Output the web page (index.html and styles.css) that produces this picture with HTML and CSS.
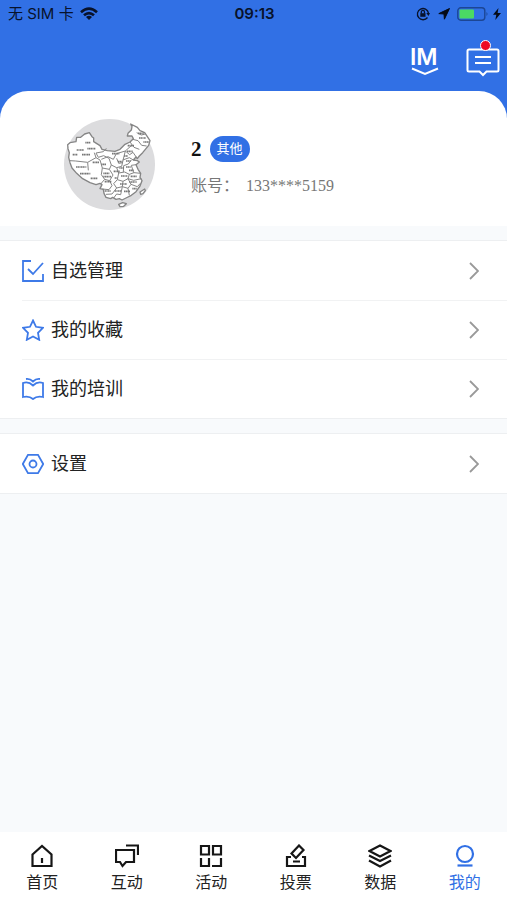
FILE: index.html
```html
<!DOCTYPE html>
<html lang="zh-CN">
<head>
<meta charset="utf-8">
<meta name="viewport" content="width=device-width, initial-scale=1">
<title>我的</title>
<link rel="stylesheet" href="styles.css">
</head>
<body>
<header class="top">
  <div class="status">
    <div class="carrier">
      <span>无 SIM 卡</span>
      <svg width="18" height="14" viewBox="0 0 18 14" fill="none" stroke="#08122b" stroke-width="2.6"><path d="M1 5.2Q9-2 17 5.2M4 8.3Q9 3.8 14 8.3"/><path d="M9 13 6 10Q9 7.600 12 10Z" fill="#08122b" stroke="none"/></svg>
    </div>
    <time class="clock">09:13</time>
    <div class="indicators">
      <svg width="14" height="14" viewBox="0 0 14 14" fill="none" stroke="#08122b" stroke-width="1.3"><path d="M11.500 10.500A5.600 5.600 0 1 1 12.500 6"/><path d="m10.300 6 2.200 3 1.500-3Z" fill="#08122b" stroke="none"/><path d="M5.300 6.500V5a1.600 1.600 0 0 1 3.200 0v1.500"/><path d="M4.300 6.200h5.200v3.600H4.300Z" fill="#08122b" stroke="none"/></svg>
      <svg class="location" width="12" height="12" viewBox="0 0 12 12" fill="#050b18" stroke="#050b18" stroke-linejoin="round"><path d="M11.500.5.8 5.600 6 6l.4 5.200Z"/></svg>
      <svg width="32" height="14" viewBox="0 0 32 14"><rect x=".8" y=".8" width="27" height="12.400" rx="3" fill="none" stroke="#1c4694" stroke-width="1.400"/><rect x="2.500" y="2.500" width="14.500" height="9" rx="1" fill="#4bd964"/><path d="M29.500 5q2 2 0 4Z" fill="#1c4694"/></svg>
      <svg width="8" height="12" viewBox="0 0 8 12" fill="#050b18"><path d="M5.500 0 0 6.800h3.300L2.300 12 8 5H4.600Z"/></svg>
    </div>
  </div>
  <div class="actions">
    <button class="action" type="button" aria-label="即时通讯">
      <svg width="32" height="36" viewBox="0 0 32 36"><text x="0" y="23" class="im">IM</text><path d="M2 26.500 15 32l13-5.500" fill="none" stroke="#fff" stroke-width="2"/></svg>
    </button>
    <button class="action" type="button" aria-label="消息">
      <svg width="34" height="38" viewBox="0 0 34 38" fill="none" stroke="#fff" stroke-width="2"><path d="M3 9.500h28q1.500 0 1.500 1.500v19q0 1.500-1.500 1.500H20.500L17 35l-3.500-3.500H3Q1.500 31.500 1.500 30V11Q1.500 9.500 3 9.500ZM9 17h16M9 23h16"/><circle cx="19.500" cy="5.500" r="5" fill="#ee0a24" stroke-width="1"/></svg>
    </button>
  </div>
</header>
<main>
  <section class="profile">
    <svg class="avatar" viewBox="42 27 273 273" role="img" aria-label="头像">
      <circle cx="178.500" cy="163.500" r="136.500" fill="#dcdcde"/>
      <g fill="#fff" stroke="#858585" stroke-width="4" stroke-linejoin="round">
        <path d="M53 104 60 98 78 95 80 82 92 82 104 72 118 68 126 80 131 84V95L150 107 156 118 172 122 195 124 210 118 225 103 240 96 250 86 246 78 232 78 234 70 244 60 246 50 242 42 262 52 270 62 284 68 300 92 296 106 286 118 278 128 268 138 262 146 258 141 250 150 262 152 268 156 258 164 264 178 272 190 270 202 276 212 270 228 258 245 244 256 228 264 216 270 208 266 198 268 188 262 182 266 168 262 162 250 160 238 150 236 156 224 150 220 138 224 120 218 98 206 80 190 66 174 60 158 56 142 58 128 54 116Z"/>
        <path d="M270 246 284 237 286 242 279 251 272 253ZM206 283 218 278 229 281 221 289 210 290Z"/>
      </g>
      <g fill="none" stroke="#858585" stroke-width="3">
        <path d="M60 152 77 153 113 157 115 181M113 157 138 143 150 150 157 174 178 178 184 165 177 145 161 137 145 142 138 129 160 125 169 115M138 143 133 128M154 148 174 140 190 148 199 131 226 123 246 105M157 174 154 194 164 208 152 222M178 178 189 195 179 212 186 227 177 239 157 237M184 165 200 173 215 169 220 147 226 123M226 123 239 134 249 127 262 146M218 150 238 143 250 150M200 173 206 189 224 186 238 193 252 188 272 190M206 189 202 209 219 214 234 206 251 211 274 206M220 186 221 167 235 162 244 150M238 193 234 206M251 188 244 166 258 164M202 209 191 221 200 234 217 230 219 214M217 230 234 235 243 223 234 206M234 235 238 256M217 230 212 254 200 252 191 264M243 223 262 230 271 220M200 234 186 252 168 253M248 88 264 92 275 106 290 108M260 68 274 75 286 72M164 208 179 212M240 96 252 112 268 118M200 145 206 160 218 158"/>
      </g>
      <g stroke="#777" stroke-width="5" stroke-dasharray="4 1">
        <path d="M106 98h16M80 120h22M112 116h24M68 134h15M96 134h24M78 171h31M90 191h31M122 205h21M128 157h20M154 163h15M186 131h22M233 107h19M231 124h17M264 70h17M267 84h21M280 96h17M160 190h18M160 200h23M164 215h21M191 184h18M208 174h14M228 171h14M213 198h19M242 199h18M210 222h21M238 216h22M194 243h20M222 244h18M247 236h13M164 243h18M204 155h13M228 153h14M222 138h12M194 204h8M237 181h14"/>
      </g>
    </svg>
    <div class="identity">
      <div class="name-row"><h1 class="name">2</h1><span class="badge">其他</span></div>
      <p class="account"><span>账号：</span><span>133****5159</span></p>
    </div>
  </section>
  <nav class="group" aria-label="我的功能">
    <a class="row" href="#watch">
      <svg class="row-icon" viewBox="0 0 22 22"><path d="M9 1H1v20h20v-7M6 9l5 5L21 3"/></svg>
      <span class="row-label">自选管理</span>
      <svg class="chevron" viewBox="0 0 10 18"><path d="m1 1 8 8-8 8"/></svg>
    </a>
    <a class="row" href="#favorites">
      <svg class="row-icon" viewBox="0 0 22 22"><path d="m11 1.500 3 6.300 7 1-5 5 1.200 7L11 17.500l-6.200 3.300 1.200-7-5-5 7-1Z"/></svg>
      <span class="row-label">我的收藏</span>
      <svg class="chevron" viewBox="0 0 10 18"><path d="m1 1 8 8-8 8"/></svg>
    </a>
    <a class="row" href="#training">
      <svg class="row-icon" viewBox="0 0 22 22"><path d="M11 7.500Q6.500 3 1 5v14q6-1.500 10 2 4-3.500 10-2V5q-5.500-2-10 2.500ZM4 1q4-.5 7 2.500 3-3 7-2.500"/></svg>
      <span class="row-label">我的培训</span>
      <svg class="chevron" viewBox="0 0 10 18"><path d="m1 1 8 8-8 8"/></svg>
    </a>
  </nav>
  <nav class="group" aria-label="系统">
    <a class="row" href="#settings">
      <svg class="row-icon" viewBox="0 0 22 22"><path d="M6 1.800h10L21.200 11 16 20.200H6L.8 11Z"/><circle cx="11" cy="11" r="3.500"/></svg>
      <span class="row-label">设置</span>
      <svg class="chevron" viewBox="0 0 10 18"><path d="m1 1 8 8-8 8"/></svg>
    </a>
  </nav>
</main>
<nav class="tabs" aria-label="主导航">
  <a class="tab" href="#home"><svg viewBox="0 0 24 24"><path d="M2.500 10.500 12 2l9.500 8.500V22h-19ZM12 14v5"/></svg><span>首页</span></a>
  <a class="tab" href="#interact"><svg viewBox="0 0 24 24"><path d="M1 6h18v12h-8l-3.500 4L5 18H1ZM11 1.500h12V11"/></svg><span>互动</span></a>
  <a class="tab" href="#events"><svg viewBox="0 0 24 24"><path d="M2 2h8v8.500H2ZM14 2h8v8.500h-8ZM2 14v8h8v-8M22 14v8h-9"/></svg><span>活动</span></a>
  <a class="tab" href="#vote"><svg viewBox="0 0 24 24"><path d="M7 13H3v9h18v-9h-3M9 17.500h7M7.500 9.500 15 1.500l4.500 4.500-7.500 8Z"/></svg><span>投票</span></a>
  <a class="tab" href="#data"><svg viewBox="0 0 24 24"><path d="M12 1.500 22.500 7 12 12.500 1.500 7ZM1 11.500l11 5.500 11-5.500M1 16.500l11 6 11-6"/></svg><span>数据</span></a>
  <a class="tab active" href="#me" aria-current="page"><svg viewBox="0 0 24 24"><circle cx="12" cy="10" r="8"/><path d="M4.500 21.500h15"/></svg><span>我的</span></a>
</nav>
</body>
</html>
```

FILE: styles.css
```css
* {
  box-sizing: border-box;
}

body {
  margin: 0;
  min-height: 100vh;
  display: flex;
  flex-direction: column;
  background: #f8fafc;
  color: #222;
  font-family: "Liberation Sans", "Noto Sans CJK SC", sans-serif;
}

svg {
  display: block;
  flex: none;
}

a {
  color: inherit;
  text-decoration: none;
}

main {
  flex: 1;
}

.top {
  background: #3170e5;
  padding-bottom: 40px;
}

.status {
  display: grid;
  grid-template-columns: 1fr auto 1fr;
  align-items: center;
  height: 28px;
  padding: 0 6px 0 8px;
  color: #08122b;
  font-family: Inter, "Noto Sans CJK SC", sans-serif;
  font-size: 15px;
  line-height: 20px;
}

.carrier,
.indicators {
  display: flex;
  align-items: center;
  gap: 6px;
}

.indicators {
  justify-content: flex-end;
  gap: 4px;
}

.location {
  margin: 0 3px 0 4px;
}

.clock {
  font-weight: 600;
}

.actions {
  display: flex;
  justify-content: flex-end;
  align-items: flex-end;
  gap: 24px;
  height: 50px;
  padding-right: 7px;
}

.action {
  padding: 0;
  border: 0;
  background: none;
}

.im {
  fill: #fff;
  font-family: Inter, sans-serif;
  font-size: 23px;
  font-weight: 600;
}

.profile {
  display: flex;
  align-items: center;
  gap: 36px;
  margin-top: -27px;
  padding: 28px 24px 16px 64px;
  border-radius: 28px 28px 0 0;
  background: #fff;
}

.avatar {
  width: 91px;
  height: 91px;
}

.identity {
  display: grid;
  gap: 14px;
  padding-top: 2px;
}

.name-row {
  display: flex;
  align-items: center;
  gap: 8px;
}

.name {
  margin: 0;
  color: #111;
  font: bold 21px/26px "Liberation Serif", serif;
}

.badge {
  padding: 0 7px;
  border-radius: 13px;
  background: #3170e5;
  color: #fff;
  font-size: 13px;
  line-height: 26px;
}

.account {
  display: flex;
  gap: 7px;
  margin: 0;
  color: #777;
  font: 16px/20px "Liberation Serif", "Noto Sans CJK SC", serif;
}

.group {
  margin-top: 14px;
  border: solid #edeff1;
  border-width: 1px 0;
  background: #fff;
}

.row {
  display: flex;
  align-items: center;
  height: 59px;
  margin-left: 22px;
  padding-right: 28px;
  color: #222;
}

.row + .row {
  border-top: 1px solid #f1f2f3;
}

.row-icon {
  width: 22px;
  height: 22px;
  fill: none;
  stroke: #3e7ae8;
  stroke-width: 1.8;
}

.row-label {
  flex: 1;
  padding-left: 7px;
  font-size: 18px;
  line-height: 26px;
}

.chevron {
  width: 10px;
  height: 18px;
  fill: none;
  stroke: #999;
  stroke-width: 1.8;
}

.tabs {
  display: grid;
  grid-template-columns: repeat(6, 1fr);
  height: 68px;
  background: #fff;
}

.tab {
  display: flex;
  flex-direction: column;
  align-items: center;
  gap: 4px;
  padding-top: 12px;
  font-size: 16px;
  line-height: 22px;
}

.tab svg {
  width: 24px;
  height: 24px;
  fill: none;
  stroke: #161616;
  stroke-width: 2.2;
}

.tab.active {
  color: #3170e5;
}

.tab.active svg {
  stroke: #3170e5;
}
```
